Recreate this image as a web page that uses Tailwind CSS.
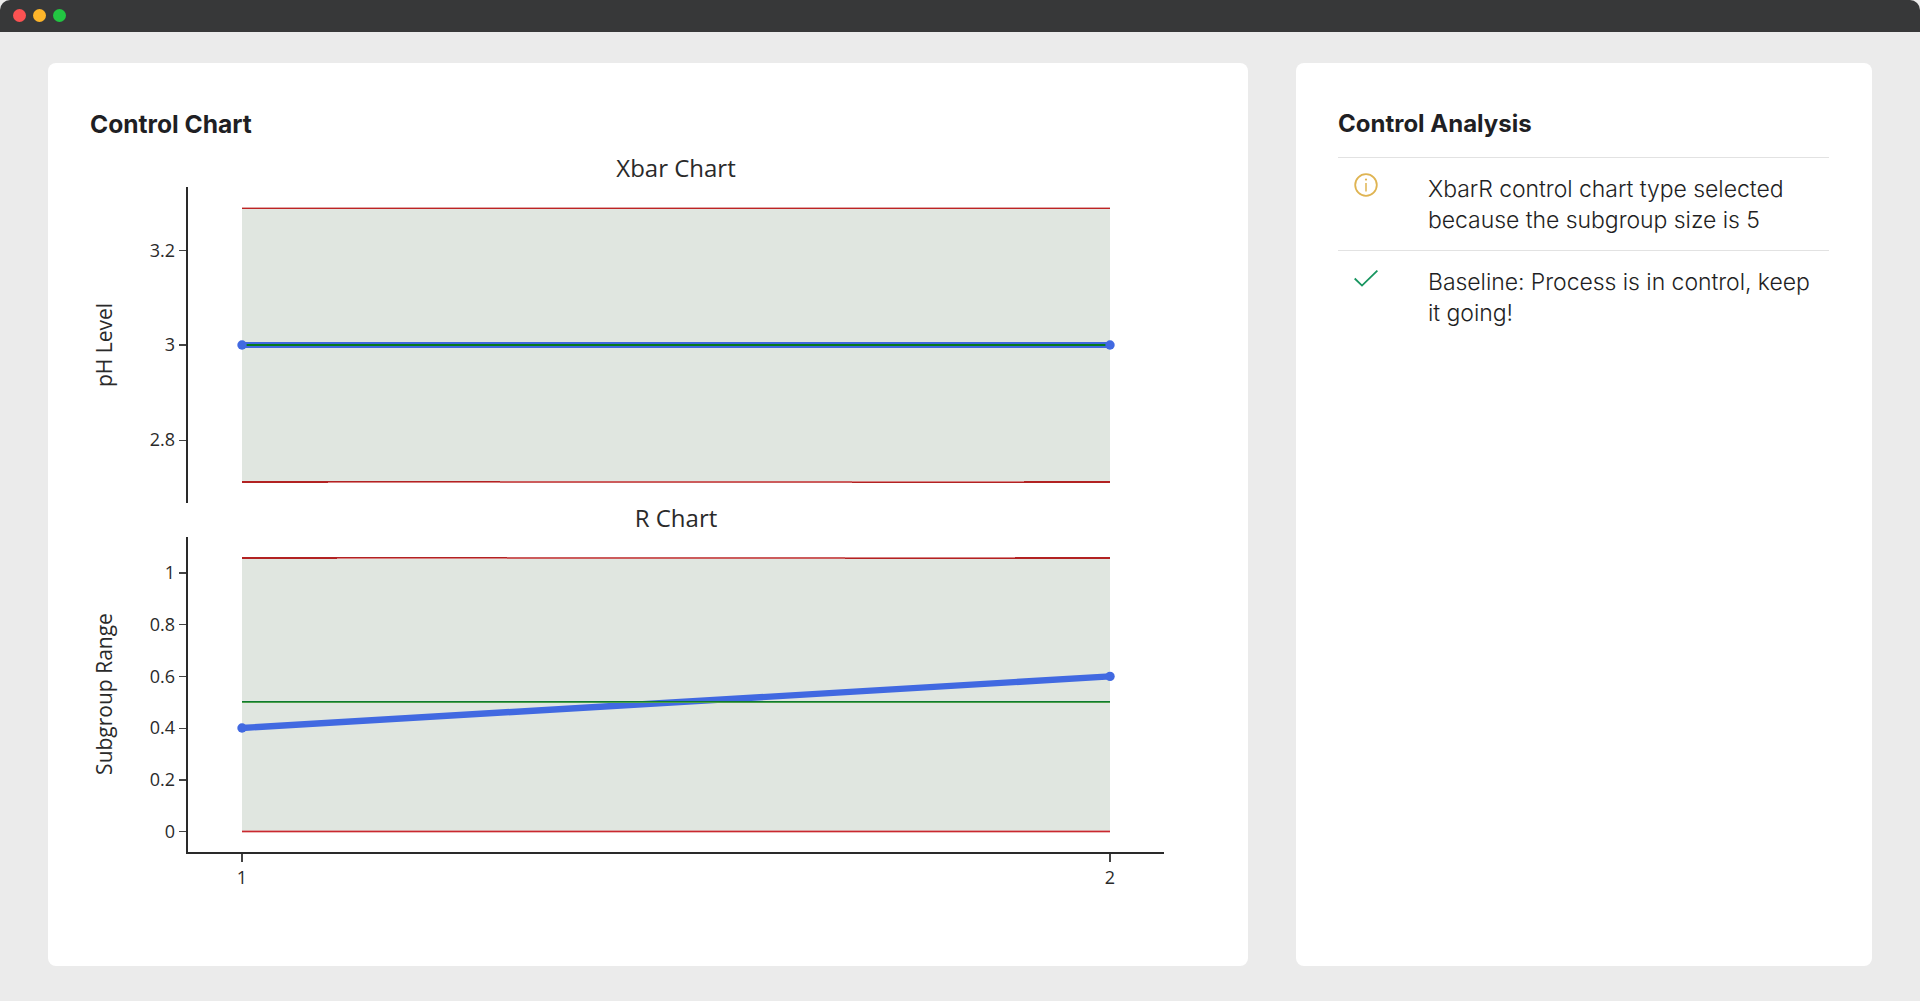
<!DOCTYPE html>
<html lang="en">
<head>
<meta charset="utf-8">
<title>Control Chart</title>
<script src="https://cdn.jsdelivr.net/npm/@tailwindcss/browser@4"></script>
</head>
<body class="m-0 h-[1001px] w-[1920px] overflow-hidden bg-[#ebebeb] font-['Inter',sans-serif] text-[#1f1f24]">
  <div class="flex h-8 items-center gap-[7px] rounded-t-[10px] bg-[#373839] pl-[13px] pb-[2px]">
    <span class="h-[13px] w-[13px] rounded-full bg-[#fb5252]"></span>
    <span class="h-[13px] w-[13px] rounded-full bg-[#fdb52a]"></span>
    <span class="h-[13px] w-[13px] rounded-full bg-[#22c542]"></span>
  </div>
  <main class="flex gap-12 px-12 pt-[31px]">
    <section class="h-[903px] w-[1200px] rounded-lg bg-white px-[42px] pt-[43px]">
      <h2 class="-mb-px text-[24.6px] leading-9 font-bold">Control Chart</h2>
      <svg class="block font-['Open_Sans',sans-serif]" width="1116" height="780" viewBox="90 141 1116 780">
        <g fill="#2a2a2a" text-anchor="middle">
          <text x="676" y="177" font-size="24">Xbar Chart</text>
          <text x="676" y="527" font-size="24">R Chart</text>
          <text transform="translate(112 345) rotate(-90)" font-size="21">pH Level</text>
          <text transform="translate(112 694) rotate(-90)" font-size="21">Subgroup Range</text>
        </g>
        <!-- Xbar plot -->
        <rect x="242" y="208" width="868" height="274" fill="#e0e6e0"/>
        <g shape-rendering="crispEdges">
          <rect x="242" y="207" width="868" height="1" fill="#e3a5a5"/>
          <rect x="242" y="208" width="868" height="1" fill="#bd2424"/>
          <rect x="242" y="481" width="86" height="2" fill="#b22222"/>
          <rect x="328" y="481" width="172" height="1" fill="#b22222"/>
          <rect x="328" y="482" width="172" height="1" fill="#d98080"/>
          <rect x="500" y="481" width="352" height="2" fill="#cc5c5c"/>
          <rect x="852" y="481" width="172" height="1" fill="#d98080"/>
          <rect x="852" y="482" width="172" height="1" fill="#b22222"/>
          <rect x="1024" y="481" width="86" height="2" fill="#b22222"/>
        </g>
        <line x1="242" y1="345" x2="1110" y2="345" stroke="#4169e1" stroke-width="6"/>
        <line x1="242" y1="345" x2="1110" y2="345" stroke="#087a1c" stroke-width="1.8"/>
        <circle cx="242" cy="345" r="4.7" fill="#4169e1"/>
        <circle cx="1110" cy="345" r="4.7" fill="#4169e1"/>
        <!-- R plot -->
        <rect x="242" y="558" width="868" height="274" fill="#e0e6e0"/>
        <g shape-rendering="crispEdges">
          <rect x="242" y="557" width="95" height="2" fill="#b22222"/>
          <rect x="337" y="557" width="170" height="1" fill="#b22222"/>
          <rect x="337" y="558" width="170" height="1" fill="#d98080"/>
          <rect x="507" y="557" width="338" height="2" fill="#cc5c5c"/>
          <rect x="845" y="557" width="170" height="1" fill="#d98080"/>
          <rect x="845" y="558" width="170" height="1" fill="#b22222"/>
          <rect x="1015" y="557" width="95" height="2" fill="#b22222"/>
          <rect x="242" y="830" width="868" height="1" fill="#dba0a0"/>
          <rect x="242" y="831" width="868" height="1" fill="#c9282f"/>
          <rect x="242" y="832" width="868" height="1" fill="#eeb8b8"/>
        </g>
        <line x1="242" y1="728" x2="1110" y2="676.4" stroke="#4169e1" stroke-width="6.4"/>
        <g shape-rendering="crispEdges">
          <rect x="242" y="701" width="868" height="1" fill="#0f7a2f"/>
          <rect x="242" y="702" width="868" height="1" fill="#4ca04c"/>
        </g>
        <circle cx="242" cy="728" r="4.7" fill="#4169e1"/>
        <circle cx="1110" cy="676.4" r="4.7" fill="#4169e1"/>
        <!-- axes -->
        <g shape-rendering="crispEdges">
          <rect x="186" y="187" width="2" height="316" fill="#2a2a2a"/>
          <rect x="186" y="537" width="2" height="317" fill="#2a2a2a"/>
          <rect x="186" y="852" width="978" height="2" fill="#2a2a2a"/>
          <rect x="179" y="250" width="7" height="1" fill="#444"/>
          <rect x="179" y="344" width="7" height="2" fill="#444"/>
          <rect x="179" y="440" width="7" height="1" fill="#444"/>
          <rect x="179" y="572" width="7" height="2" fill="#444"/>
          <rect x="179" y="624" width="7" height="1" fill="#444"/>
          <rect x="179" y="676" width="7" height="1" fill="#444"/>
          <rect x="179" y="728" width="7" height="1" fill="#444"/>
          <rect x="179" y="779" width="7" height="2" fill="#444"/>
          <rect x="179" y="831" width="7" height="1" fill="#444"/>
          <rect x="241" y="854" width="2" height="8" fill="#444"/>
          <rect x="1109" y="854" width="2" height="8" fill="#444"/>
        </g>
        <g fill="#2a2a2a" font-size="18" text-anchor="end">
          <text x="175" y="257">3.2</text>
          <text x="175" y="351">3</text>
          <text x="175" y="446">2.8</text>
          <text x="175" y="579">1</text>
          <text x="175" y="631">0.8</text>
          <text x="175" y="683">0.6</text>
          <text x="175" y="734">0.4</text>
          <text x="175" y="786">0.2</text>
          <text x="175" y="838">0</text>
        </g>
        <g fill="#2a2a2a" font-size="18" text-anchor="middle">
          <text x="242" y="884">1</text>
          <text x="1110" y="884">2</text>
        </g>
      </svg>
    </section>
    <section class="h-[903px] w-[576px] rounded-lg bg-white px-[42px] pt-[43px]">
      <h2 class="pb-[15px] text-[24px] leading-9 font-bold">Control Analysis</h2>
      <ul class="w-[491px]">
        <li class="flex h-[93px] border-t border-[#e2e2e2] pt-4">
          <div class="w-[90px] shrink-0 pl-[16px]">
            <svg class="-mt-[1px] block" width="24" height="24" viewBox="0 0 24 24" fill="none" stroke="#dfb452" stroke-width="1.8"><circle cx="12" cy="12" r="10.8"/><line x1="12" y1="10" x2="12" y2="18.5" stroke-width="1.5"/><circle cx="12" cy="6.6" r="1.1" fill="#dfb452" stroke="none"/></svg>
          </div>
          <p class="max-w-[396px] text-[23px] leading-[31px] font-light tracking-[-0.05px]">XbarR control chart type selected because the subgroup size is 5</p>
        </li>
        <li class="flex border-t border-[#e2e2e2] pt-4">
          <div class="w-[90px] shrink-0 pl-[16px]">
            <svg class="mt-[3px] block" width="24" height="17" viewBox="0 0 24 17" fill="none" stroke="#17955f" stroke-width="1.8"><path d="M0.7 8.5 L8 15.6 L23.4 0.6"/></svg>
          </div>
          <p class="max-w-[396px] text-[23px] leading-[31px] font-light tracking-[-0.05px]">Baseline: Process is in control, keep it going!</p>
        </li>
      </ul>
    </section>
  </main>
</body>
</html>
